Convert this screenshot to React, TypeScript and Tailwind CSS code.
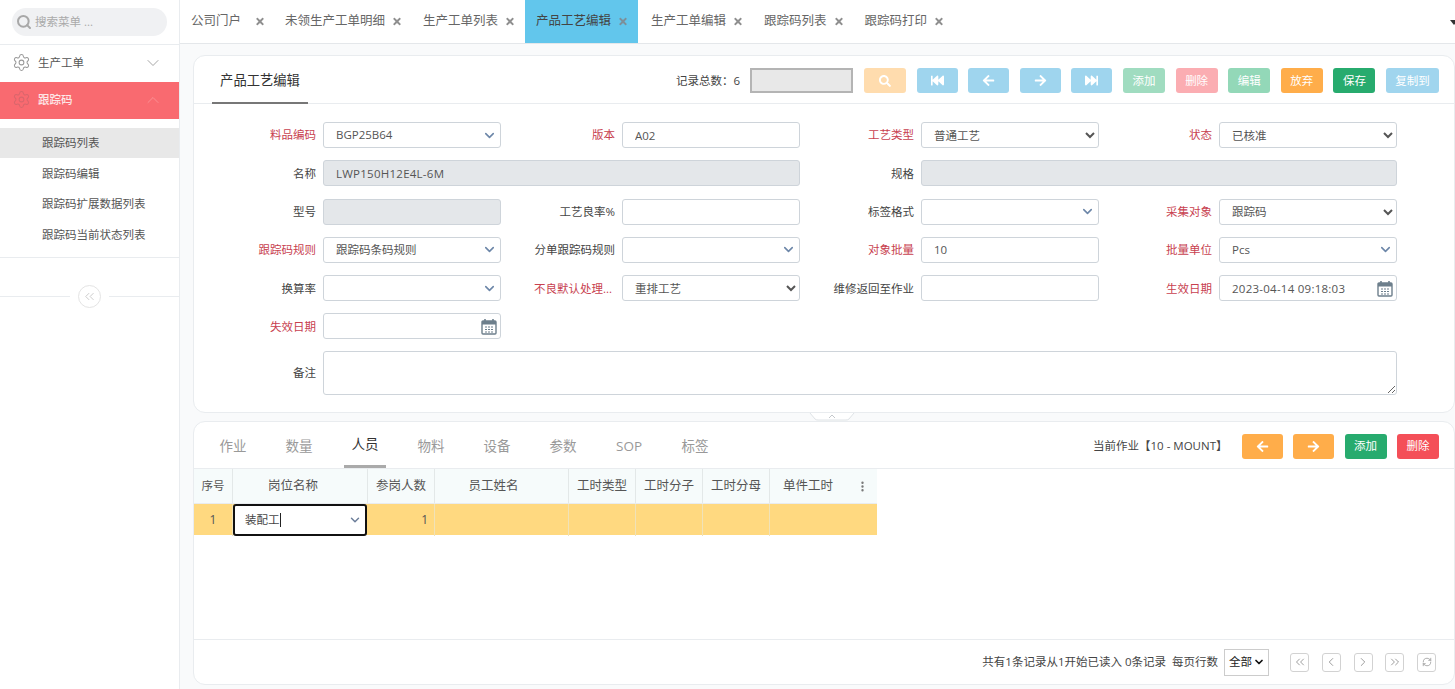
import { ReactNode } from 'react';
import { ChevronDown, ChevronUp, ChevronLeft, ChevronRight, ChevronsLeft, ChevronsRight, EllipsisVertical, RefreshCw, Search, Settings } from 'lucide-react';
import { FaArrowLeft, FaArrowRight, FaFastBackward, FaFastForward, FaSearch, FaTimes } from 'react-icons/fa';

const topTabs = ['未领生产工单明细', '生产工单列表'];
const topTabsAfter = ['生产工单编辑', '跟踪码列表', '跟踪码打印'];
const subMenu = ['跟踪码编辑', '跟踪码扩展数据列表', '跟踪码当前状态列表'];
const detailTabs = ['作业', '数量', '人员', '物料', '设备', '参数', 'SOP', '标签'];
const gridHeads = ['工时类型', '工时分子', '工时分母'];

function TopTab({ label }: { label: string }) {
  return (
    <div className="flex h-full items-center gap-[7px] pl-[11px] pr-[10px] text-[12.5px] text-[#666]">
      <span>{label}</span>
      <FaTimes className="w-[10px] text-[11px] text-[#8f8f8f]" />
    </div>
  );
}

function Field({ label, required, children }: { label?: string; required?: boolean; children?: ReactNode }) {
  return (
    <div className="flex items-center">
      <label className={required ? 'w-[113px] shrink-0 whitespace-pre text-right text-[#c8414f]' : 'w-[113px] shrink-0 whitespace-pre text-right text-[#444]'}>{label}</label>
      <div className="ml-[7px] w-[178px] shrink-0">{children}</div>
    </div>
  );
}

function TextBox({ value = '', disabled }: { value?: string; disabled?: boolean }) {
  return (
    <input
      readOnly
      value={value}
      className={
        disabled
          ? 'h-[26px] w-full rounded-[3px] border border-[#ced4da] bg-[#e4e7ea] px-[12px] tracking-[0.25px] text-[#555] outline-none'
          : 'h-[26px] w-full rounded-[3px] border border-[#ced4da] bg-white px-[12px] text-[#555] outline-none'
      }
    />
  );
}

function ComboBox({ value = '' }: { value?: string }) {
  return (
    <div className="flex h-[26px] w-full items-center justify-between rounded-[3px] border border-[#ced4da] bg-white pl-[12px] pr-[3px] text-[#555]">
      <span>{value}</span>
      <ChevronDown size={15} strokeWidth={2.5} className="text-[#6c86a8]" />
    </div>
  );
}

function NativeSelect({ value }: { value: string }) {
  return (
    <select className="h-[26px] w-full rounded-[3px] border border-[#ced4da] bg-white pl-[8px] text-[#555] outline-none" defaultValue={value}>
      <option>{value}</option>
    </select>
  );
}

function CalendarIcon() {
  return (
    <svg width="16" height="17" viewBox="0 0 16 17" fill="none">
      <rect x="1" y="3" width="14" height="13" rx="1" stroke="#6d7f8c" strokeWidth="1.4" />
      <rect x="1" y="3" width="14" height="3.5" fill="#6d7f8c" />
      <path d="M4 1v3M12 1v3" stroke="#6d7f8c" strokeWidth="1.6" />
      <path d="M4 9h2M7 9h2M10 9h2M4 11.5h2M7 11.5h2M10 11.5h2M4 14h2M7 14h2M10 14h2" stroke="#6d7f8c" strokeWidth="1.2" />
    </svg>
  );
}

function DateBox({ value = '' }: { value?: string }) {
  return (
    <div className="flex h-[26px] w-full items-center justify-between rounded-[3px] border border-[#ced4da] bg-white pl-[12px] pr-[3px] text-[#555]">
      <span className="tracking-[0.25px]">{value}</span>
      <CalendarIcon />
    </div>
  );
}

function PagerButton({ children }: { children: ReactNode }) {
  return <button className="flex h-[19px] w-[19px] items-center justify-center rounded-[3px] border border-[#d2d2d2] bg-white text-[#888]">{children}</button>;
}

export default function App() {
  return (
    <div className="flex h-screen w-screen overflow-hidden bg-white font-['Open_Sans','Noto_Sans_CJK_SC',sans-serif] text-[11.5px] text-[#444]">
      {/* sidebar */}
      <aside className="flex w-[180px] shrink-0 flex-col border-r border-[#e9ecef] bg-white">
        <div className="flex h-[45px] shrink-0 items-center border-b border-[#e9ecef] px-[12px]">
          <div className="flex h-[28px] w-full items-center gap-[3px] rounded-full bg-[#f0f1f3] pl-[4px] text-[#aaa]">
            <Search size={16} strokeWidth={3} className="text-[#a8a8a8]" />
            <span>搜索菜单 ...</span>
          </div>
        </div>
        <div className="flex h-[37px] shrink-0 items-center pb-[2px] pl-[12px] pr-[18px] text-[#555]">
          <Settings size={19} strokeWidth={1.3} className="text-[#999]" />
          <span className="ml-[7px] flex-1">生产工单</span>
          <ChevronDown size={20} strokeWidth={0.9} className="-mr-[2px] text-[#888]" />
        </div>
        <div className="flex h-[37px] shrink-0 items-center bg-[#f96a70] pb-[2px] pl-[12px] pr-[18px] font-medium text-[#fde8e8]">
          <Settings size={19} strokeWidth={1.3} className="text-[#d9666c]" />
          <span className="ml-[7px] flex-1">跟踪码</span>
          <ChevronUp size={20} strokeWidth={0.9} className="-mr-[2px] text-[#fb9ca0]" />
        </div>
        <div className="mt-[9px] flex flex-col border-b border-[#e9ecef] pb-[7px] text-[#555]">
          <div className="flex h-[30px] items-center bg-[#e8e8e8] pl-[42px]">跟踪码列表</div>
          {subMenu.map(item => (
            <div key={item} className="flex h-[30.5px] items-center pl-[42px]">
              {item}
            </div>
          ))}
        </div>
        <div className="mt-[27px] flex items-center">
          <div className="h-px flex-1 bg-[#e9ecef]" />
          <div className="mx-[8px] flex h-[23px] w-[23px] items-center justify-center rounded-full border border-[#e4e4e4] text-[#bbb]">
            <ChevronsLeft size={15} strokeWidth={1.2} />
          </div>
          <div className="h-px flex-1 bg-[#e9ecef]" />
        </div>
      </aside>

      <main className="flex min-w-0 flex-1 flex-col bg-[#f9fafb]">
        {/* open pages */}
        <div className="flex h-[44px] shrink-0 items-center border-b border-[#e4e7ea] bg-white">
          <div className="flex h-full items-center gap-[14px] pl-[11px] pr-[9px] text-[12.5px] text-[#666]">
            <span>公司门户</span>
            <FaTimes className="w-[10px] text-[11px] text-[#8f8f8f]" />
          </div>
          {topTabs.map(t => (
            <TopTab key={t} label={t} />
          ))}
          <div className="mr-[2px] flex h-full items-center gap-[7px] bg-[#62c6ec] pl-[11px] pr-[10px] text-[12.5px] text-[#444]">
            <span>产品工艺编辑</span>
            <FaTimes className="w-[10px] text-[11px] text-[#7d8f99]" />
          </div>
          {topTabsAfter.map(t => (
            <TopTab key={t} label={t} />
          ))}
          <svg width="8" height="6" viewBox="0 0 8 6" className="-mr-[3px] ml-auto shrink-0">
            <path d="M0 1h8L4 6z" fill="#333" />
          </svg>
        </div>

        <div className="flex min-h-0 flex-1 flex-col pb-[4px] pl-[13px] pt-[11px]">
          {/* editor card */}
          <section className="h-[358px] shrink-0 rounded-[12px] border border-[#e9ecef] bg-white">
            <div className="flex h-[48px] items-end border-b border-[#e9ecef] pl-[18px] pr-[15px]">
              <div className="-mb-px flex h-[47px] w-[96px] items-center justify-center border-b-2 border-[#777] pt-[3px] text-[13.3px] text-[#333]">产品工艺编辑</div>
              <div className="ml-auto flex h-full items-center pt-[2px]">
                <span className="mr-[10px] text-[#444]">记录总数：6</span>
                <div className="mr-[11px] h-[25px] w-[103px] border-2 border-[#b4b4b4] bg-[#e8e8e8]" />
                <div className="flex items-center gap-[10.6px] text-white">
                  <button className="flex h-[25px] w-[42px] items-center justify-center rounded-[3px] bg-[#ffdcae]"><FaSearch size={12} /></button>
                  <button className="flex h-[25px] w-[41px] items-center justify-center rounded-[3px] bg-[#9fd5ee]"><FaFastBackward size={13} /></button>
                  <button className="flex h-[25px] w-[41px] items-center justify-center rounded-[3px] bg-[#9fd5ee]"><FaArrowLeft size={13} /></button>
                  <button className="flex h-[25px] w-[41px] items-center justify-center rounded-[3px] bg-[#9fd5ee]"><FaArrowRight size={13} /></button>
                  <button className="flex h-[25px] w-[41px] items-center justify-center rounded-[3px] bg-[#9fd5ee]"><FaFastForward size={13} /></button>
                  <button className="h-[25px] w-[42px] rounded-[3px] bg-[#a0dcc0]">添加</button>
                  <button className="h-[25px] w-[42px] rounded-[3px] bg-[#fbadb2]">删除</button>
                  <button className="h-[25px] w-[42px] rounded-[3px] bg-[#93d8b8]">编辑</button>
                  <button className="h-[25px] w-[42px] rounded-[3px] bg-[#ffad4a]">放弃</button>
                  <button className="h-[25px] w-[42px] rounded-[3px] bg-[#27ab6e]">保存</button>
                  <button className="h-[25px] w-[53px] rounded-[3px] bg-[#a0d5ee]">复制到</button>
                </div>
              </div>
            </div>
            <div className="grid grid-cols-[299px_299px_298px_298px] gap-y-[12.3px] pl-[9px] pt-[18px]">
              <Field label="料品编码" required><ComboBox value="BGP25B64" /></Field>
              <Field label="版本" required><TextBox value="A02" /></Field>
              <Field label="工艺类型" required><NativeSelect value="普通工艺" /></Field>
              <Field label="状态" required><NativeSelect value="已核准" /></Field>

              <div className="col-span-2 flex items-center">
                <label className="w-[113px] shrink-0 text-right">名称</label>
                <div className="ml-[7px] w-[477px]"><TextBox value="LWP150H12E4L-6M" disabled /></div>
              </div>
              <div className="col-span-2 flex items-center">
                <label className="w-[113px] shrink-0 text-right">规格</label>
                <div className="ml-[7px] w-[476px]"><TextBox disabled /></div>
              </div>

              <Field label="型号"><TextBox disabled /></Field>
              <Field label="工艺良率%"><TextBox /></Field>
              <Field label="标签格式"><ComboBox /></Field>
              <Field label="采集对象" required><NativeSelect value="跟踪码" /></Field>

              <Field label="跟踪码规则" required><ComboBox value="跟踪码条码规则" /></Field>
              <Field label="分单跟踪码规则"><ComboBox /></Field>
              <Field label="对象批量" required><TextBox value="10" /></Field>
              <Field label="批量单位" required><ComboBox value="Pcs" /></Field>

              <Field label="换算率"><ComboBox /></Field>
              <Field label={'不良默认处理...\u00a0'} required><NativeSelect value="重排工艺" /></Field>
              <Field label="维修返回至作业"><TextBox /></Field>
              <Field label="生效日期" required><DateBox value="2023-04-14 09:18:03" /></Field>

              <Field label="失效日期" required><DateBox /></Field>
              <div className="col-span-3" />

              <div className="col-span-4 -mt-px flex">
                <label className="flex h-[43px] w-[113px] shrink-0 items-center justify-end">备注</label>
                <textarea readOnly className="ml-[7px] h-[44px] flex-1 rounded-[3px] border border-[#ced4da] bg-white outline-none" />
              </div>
            </div>
          </section>

          {/* splitter handle */}
          <div className="flex h-[8px] shrink-0 justify-center pl-[16px]">
            <svg width="46" height="8" viewBox="0 0 46 8" fill="none">
              <path d="M1 0 L6 6 Q7 7 9 7 H37 Q39 7 40 6 L45 0" fill="#fff" stroke="#dfe3e6" />
              <path d="M20 5 L23 2 L26 5" stroke="#c4c8cc" />
            </svg>
          </div>

          {/* detail card */}
          <section className="flex min-h-0 flex-1 flex-col rounded-[12px] border border-[#e9ecef] bg-white">
            <div className="flex h-[47px] shrink-0 items-center border-b border-[#e9ecef] pl-[18px] pr-[15px]">
              <div className="flex h-full items-center text-[13.5px] text-[#999]">
                {detailTabs.map(t =>
                  t === '人员' ? (
                    <div key={t} className="mx-[12px] flex h-full w-[42px] items-center justify-center border-b-[3px] border-[#aaa] pt-[2px] text-[#333]">{t}</div>
                  ) : (
                    <div key={t} className="mx-[12px] flex h-full w-[42px] items-center justify-center pt-[2px] first:ml-0">{t}</div>
                  )
                )}
              </div>
              <span className="ml-auto mr-[14px] mt-[2px] text-[#444]">当前作业【10 - MOUNT】</span>
              <div className="mt-[2px] flex items-center gap-[10.5px] text-white">
                <button className="flex h-[25px] w-[41px] items-center justify-center rounded-[3px] bg-[#ffad4a]"><FaArrowLeft size={13} /></button>
                <button className="flex h-[25px] w-[41px] items-center justify-center rounded-[3px] bg-[#ffad4a]"><FaArrowRight size={13} /></button>
                <button className="h-[25px] w-[42px] rounded-[3px] bg-[#27ab6e]">添加</button>
                <button className="h-[25px] w-[42px] rounded-[3px] bg-[#f44f58]">删除</button>
              </div>
            </div>

            <div className="min-h-0 flex-1 text-[#555]">
              <div className="grid h-[35px] w-[683px] grid-cols-[39px_135px_67px_134px_67px_67px_67px_107px] items-stretch border-b border-[#e9ecef] bg-[#f6fbfb] text-[12.5px]">
                <div className="flex items-center justify-center border-r border-[#e3e8e8] text-[11.5px]">序号</div>
                <div className="flex items-center justify-center border-r border-[#e3e8e8] pr-[14px]">岗位名称</div>
                <div className="flex items-center justify-center border-r border-[#e3e8e8]">参岗人数</div>
                <div className="flex items-center justify-center border-r border-[#e3e8e8] pr-[16px]">员工姓名</div>
                {gridHeads.map(h => (
                  <div key={h} className="flex items-center justify-center border-r border-[#e3e8e8]">{h}</div>
                ))}
                <div className="flex items-center justify-between pl-[13px] pr-[8px]">
                  <span>单件工时</span>
                  <EllipsisVertical size={13} strokeWidth={2.4} className="text-[#777]" />
                </div>
              </div>
              <div className="grid h-[31px] w-[683px] grid-cols-[39px_135px_67px_134px_67px_67px_67px_107px] items-stretch bg-[#ffd980] text-[12px]">
                <div className="flex items-center justify-center border-r border-[#f0e2b8]">1</div>
                <div className="z-10 mr-px flex h-[32px] items-center justify-between rounded-[3px] border-2 border-[#111] bg-white pl-[10px] pr-[3px] text-[11.5px]">
                  <span className="flex items-center text-[#444]">装配工<span className="h-[14px] w-px bg-[#222]" /></span>
                  <ChevronDown size={14} strokeWidth={2.5} className="text-[#6c7e9a]" />
                </div>
                <div className="flex items-center justify-end border-r border-[#f0e2b8] pr-[6px]">1</div>
                <div className="border-r border-[#f0e2b8]" />
                <div className="border-r border-[#f0e2b8]" />
                <div className="border-r border-[#f0e2b8]" />
                <div className="border-r border-[#f0e2b8]" />
                <div />
              </div>
            </div>

            <div className="flex h-[45px] shrink-0 items-center border-t border-[#e9ecef] pr-[18px]">
              <span className="ml-auto text-[#444]">共有1条记录从1开始已读入 0条记录&nbsp;&nbsp;每页行数</span>
              <div className="ml-[6px] flex h-[27px] w-[45px] items-center justify-between border border-[#ccc] bg-white pl-[4px] pr-[3px] text-[11.5px] text-[#222]">
                <span>全部</span>
                <ChevronDown size={12} strokeWidth={3.5} className="text-[#111]" />
              </div>
              <div className="ml-[21px] flex items-center gap-[12.75px]">
                <PagerButton><ChevronsLeft size={14} strokeWidth={1.4} /></PagerButton>
                <PagerButton><ChevronLeft size={14} strokeWidth={1.4} /></PagerButton>
                <PagerButton><ChevronRight size={14} strokeWidth={1.4} /></PagerButton>
                <PagerButton><ChevronsRight size={14} strokeWidth={1.4} /></PagerButton>
                <PagerButton><RefreshCw size={10} strokeWidth={1.6} /></PagerButton>
              </div>
            </div>
          </section>
        </div>
      </main>
    </div>
  );
}
